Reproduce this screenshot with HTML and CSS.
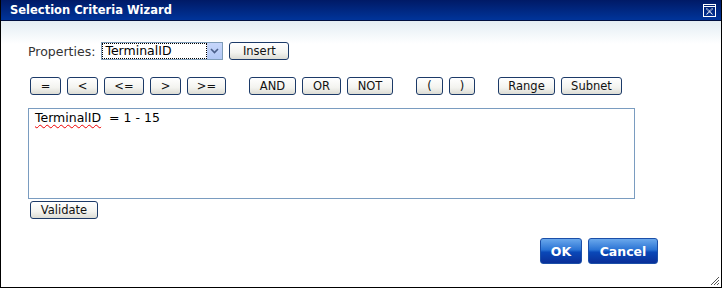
FILE: index.html
```html
<!DOCTYPE html>
<html lang="en">
<head>
  <meta charset="UTF-8">
  <title>Selection Criteria Wizard</title>
  <link rel="stylesheet" href="styles.css">
</head>
<body>
  <div class="dialog">
    <div class="titlebar">
      <span class="title">Selection Criteria Wizard</span>
      <span class="close">
        <svg width="13" height="13" viewBox="0 0 13 13">
          <rect x="0.5" y="0.5" width="12" height="12" fill="none" stroke="#fff"/>
          <line x1="0.5" y1="2.5" x2="12.5" y2="2.5" stroke="#fff"/>
          <path d="M3.5 4.5 L9.5 10.5 M9.5 4.5 L3.5 10.5" stroke="#fff" stroke-width="1.2" stroke-dasharray="1 0.6"/>
        </svg>
      </span>
    </div>

    <div class="content">
      <div class="prop-row">
        <label class="prop-label">Properties:</label>
        <div class="select">
          <span class="select-value">TerminalID</span>
          <span class="select-arrow">
            <svg width="9" height="6" viewBox="0 0 9 6"><path d="M1 1 L4.5 4.5 L8 1" fill="none" stroke="#4a5f8a" stroke-width="1.6"/></svg>
          </span>
        </div>
        <button class="btn btn-insert">Insert</button>
      </div>

      <div class="op-row">
        <div class="group">
          <button class="btn w31">=</button>
          <button class="btn w31">&lt;</button>
          <button class="btn w40">&lt;=</button>
          <button class="btn w31">&gt;</button>
          <button class="btn w39">&gt;=</button>
        </div>
        <div class="group">
          <button class="btn w47">AND</button>
          <button class="btn w39">OR</button>
          <button class="btn w46">NOT</button>
        </div>
        <div class="group">
          <button class="btn w27">(</button>
          <button class="btn w26">)</button>
        </div>
        <div class="group">
          <button class="btn w57">Range</button>
          <button class="btn w61">Subnet</button>
        </div>
      </div>

      <div class="editor"><span class="spell">TerminalID</span>&nbsp; = 1 - 15</div>

      <button class="btn btn-validate">Validate</button>

      <div class="actions">
        <button class="btn-blue ok">OK</button>
        <button class="btn-blue cancel">Cancel</button>
      </div>
    </div>

    <span class="grip">
      <svg width="12" height="12" viewBox="0 0 12 12">
        <path d="M11 3 L3 11 M11 6 L6 11 M11 9 L9 11" stroke="#555" stroke-width="1"/>
      </svg>
    </span>
  </div>
</body>
</html>
```

FILE: styles.css
```css
body {
  margin: 0;
  padding: 0;
  background: #fff;
  font-family: "DejaVu Sans", Verdana, sans-serif;
  font-size: 12.5px;
  color: #222;
}

.dialog {
  position: relative;
  width: 720px;
  height: 287px;
  border: 1px solid #000;
  border-top: none;
  background: linear-gradient(to bottom, #cbd9e4 0px, #dce7ef 14px, #eef4f8 30px, #fafcfd 40px, #fff 44px);
}

/* title bar */
.titlebar {
  height: 20px;
  display: flex;
  align-items: center;
  justify-content: space-between;
  padding: 0 5px 0 9px;
  background: linear-gradient(to bottom, #001a66, #00349a);
  border-bottom: 1px solid #000f40;
}
.title {
  color: #fff;
  font-weight: bold;
  font-size: 11.5px;
}
.close {
  display: flex;
}

.content {
  padding: 20px 0 0 27px;
}

/* properties row */
.prop-row {
  display: flex;
  align-items: center;
  height: 20px;
}
.prop-label {
  font-size: 12.5px;
  color: #333;
  margin-right: 6px;
}
.select {
  width: 122px;
  height: 18px;
  border: 1px solid #7f9db9;
  background: #fff;
  display: flex;
  align-items: center;
  box-sizing: border-box;
}
.select-value {
  flex: 1;
  margin: 1px;
  height: 14px;
  line-height: 14px;
  padding-left: 2px;
  font-size: 12.5px;
  color: #000;
  outline: 1px dotted #000;
}
.select-arrow {
  width: 15px;
  height: 16px;
  background: linear-gradient(to bottom, #c6d6fb, #b2c8f5);
  display: flex;
  align-items: center;
  justify-content: center;
}
.btn-insert {
  margin-left: 6px;
  width: 60px;
  height: 20px;
}

/* generic grey button */
.btn {
  font-family: "DejaVu Sans", Verdana, sans-serif;
  font-size: 11.5px;
  color: #111;
  background: linear-gradient(to bottom, #ffffff, #f3f3ef 60%, #dcdcd4);
  border: 1px solid #1c3a68;
  border-radius: 3px;
  height: 18px;
  padding: 0;
  box-sizing: border-box;
  line-height: 15px;
}

.op-row {
  display: flex;
  margin-top: 16px;
  margin-left: 2px;
  gap: 23px;
}
.group {
  display: flex;
  gap: 6px;
}
.w26 { width: 26px; }
.w27 { width: 27px; }
.w31 { width: 31px; }
.w39 { width: 39px; }
.w40 { width: 40px; }
.w46 { width: 46px; }
.w47 { width: 47px; }
.w57 { width: 57px; }
.w61 { width: 61px; }

/* expression box */
.editor {
  margin-top: 13px;
  width: 607px;
  height: 91px;
  box-sizing: border-box;
  border: 1px solid #7a9cc0;
  background: #fff;
  padding: 1px 6px;
  color: #000;
}
.spell {
  text-decoration: underline wavy #e00;
  text-decoration-thickness: 1px;
  text-underline-offset: 2px;
}

.btn-validate {
  display: block;
  margin-top: 2px;
  margin-left: 2px;
  width: 68px;
  height: 18px;
}

/* blue action buttons */
.actions {
  display: flex;
  gap: 6px;
  margin-top: 19px;
  margin-left: 512px;
}
.btn-blue {
  height: 26px;
  padding: 0;
  border: 1px solid #1b4fa8;
  border-radius: 3px;
  background: linear-gradient(to bottom, #6aa8ec 0%, #2a73d4 45%, #0a48b8 55%, #0a2f98 100%);
  color: #fff;
  font-family: "DejaVu Sans", Verdana, sans-serif;
  font-weight: bold;
  font-size: 12.5px;
}
.ok { width: 42px; }
.cancel { width: 70px; }

.grip {
  position: absolute;
  right: 1px;
  bottom: 1px;
  display: flex;
}
```
